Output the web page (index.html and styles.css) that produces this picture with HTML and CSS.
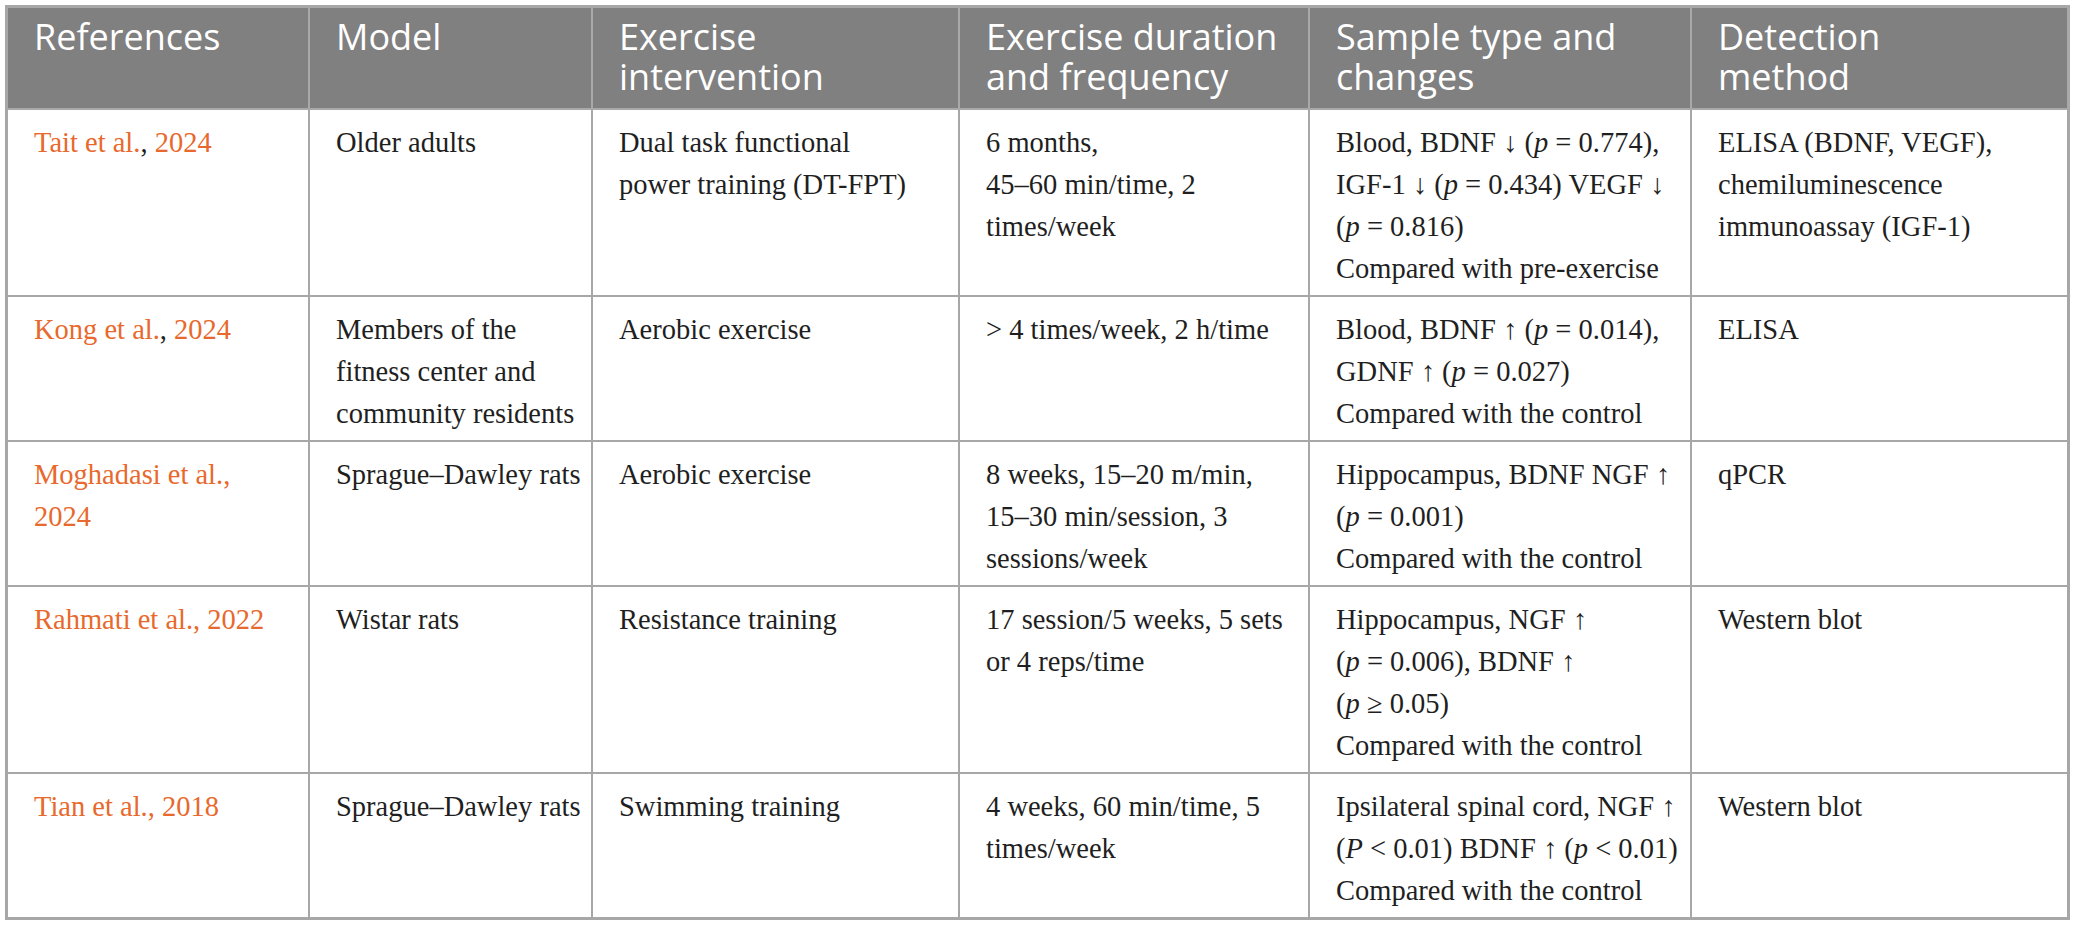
FILE: index.html
```html
<!DOCTYPE html>
<html lang="en">
<head>
<meta charset="utf-8">
<title>Exercise and neurotrophic factors</title>
<link rel="stylesheet" href="styles.css">
</head>
<body>
<div class="table">
  <div class="th">References</div>
  <div class="th">Model</div>
  <div class="th">Exercise<br>intervention</div>
  <div class="th">Exercise duration<br>and frequency</div>
  <div class="th">Sample type and<br>changes</div>
  <div class="th last">Detection<br>method</div>

  <div class="td"><span class="ref">Tait et al.</span>, <span class="ref">2024</span></div>
  <div class="td">Older adults</div>
  <div class="td">Dual task functional<br>power training (DT-FPT)</div>
  <div class="td">6 months,<br>45–60 min/time, 2<br>times/week</div>
  <div class="td">Blood, BDNF ↓ (<i>p</i> = 0.774),<br>IGF-1 ↓ (<i>p</i> = 0.434) VEGF ↓<br>(<i>p</i> = 0.816)<br>Compared with pre-exercise</div>
  <div class="td last">ELISA (BDNF, VEGF),<br>chemiluminescence<br>immunoassay (IGF-1)</div>

  <div class="td"><span class="ref">Kong et al.</span>, <span class="ref">2024</span></div>
  <div class="td">Members of the<br>fitness center and<br>community residents</div>
  <div class="td">Aerobic exercise</div>
  <div class="td">&gt; 4 times/week, 2 h/time</div>
  <div class="td">Blood, BDNF ↑ (<i>p</i> = 0.014),<br>GDNF ↑ (<i>p</i> = 0.027)<br>Compared with the control</div>
  <div class="td last">ELISA</div>

  <div class="td"><span class="ref">Moghadasi et al.,<br>2024</span></div>
  <div class="td">Sprague–Dawley rats</div>
  <div class="td">Aerobic exercise</div>
  <div class="td">8 weeks, 15–20 m/min,<br>15–30 min/session, 3<br>sessions/week</div>
  <div class="td">Hippocampus, BDNF NGF ↑<br>(<i>p</i> = 0.001)<br>Compared with the control</div>
  <div class="td last">qPCR</div>

  <div class="td"><span class="ref">Rahmati et al., 2022</span></div>
  <div class="td">Wistar rats</div>
  <div class="td">Resistance training</div>
  <div class="td">17 session/5 weeks, 5 sets<br>or 4 reps/time</div>
  <div class="td">Hippocampus, NGF ↑<br>(<i>p</i> = 0.006), BDNF ↑<br>(<i>p</i> ≥ 0.05)<br>Compared with the control</div>
  <div class="td last">Western blot</div>

  <div class="td bottom"><span class="ref">Tian et al., 2018</span></div>
  <div class="td bottom">Sprague–Dawley rats</div>
  <div class="td bottom">Swimming training</div>
  <div class="td bottom">4 weeks, 60 min/time, 5<br>times/week</div>
  <div class="td bottom">Ipsilateral spinal cord, NGF ↑<br>(<i>P</i> &lt; 0.01) BDNF ↑ (<i>p</i> &lt; 0.01)<br>Compared with the control</div>
  <div class="td bottom last">Western blot</div>
</div>
</body>
</html>
```

FILE: styles.css
```css
html, body {
  margin: 0;
  padding: 0;
  background: #ffffff;
}

body {
  padding: 5px;
}

.table {
  display: grid;
  grid-template-columns: 302px 283px 367px 350px 382px 378px;
  width: max-content;
  border-left: 3px solid #a7a7a7;
  border-top: 3px solid #a7a7a7;
}

.th,
.td {
  box-sizing: border-box;
  border-right: 2px solid #a7a7a7;
  border-bottom: 2px solid #a7a7a7;
  white-space: nowrap;
  padding-left: 26px;
}

.th {
  background: #808080;
  color: #ffffff;
  font-family: "Open Sans", "Noto Sans", sans-serif;
  font-size: 36px;
  line-height: 40px;
  padding-top: 9px;
  padding-bottom: 11px;
  border-right-color: #a9a9a9;
  border-bottom-color: #a9a9a9;
}

.td {
  color: #1f1f1f;
  font-family: "Liberation Serif", "Times New Roman", serif;
  font-size: 28.5px;
  line-height: 42px;
  padding-top: 12px;
  padding-bottom: 5px;
}

.last {
  border-right-width: 3px;
}

.bottom {
  border-bottom-width: 3px;
}

.ref {
  color: #e8692d;
}

i {
  font-style: italic;
}
```
